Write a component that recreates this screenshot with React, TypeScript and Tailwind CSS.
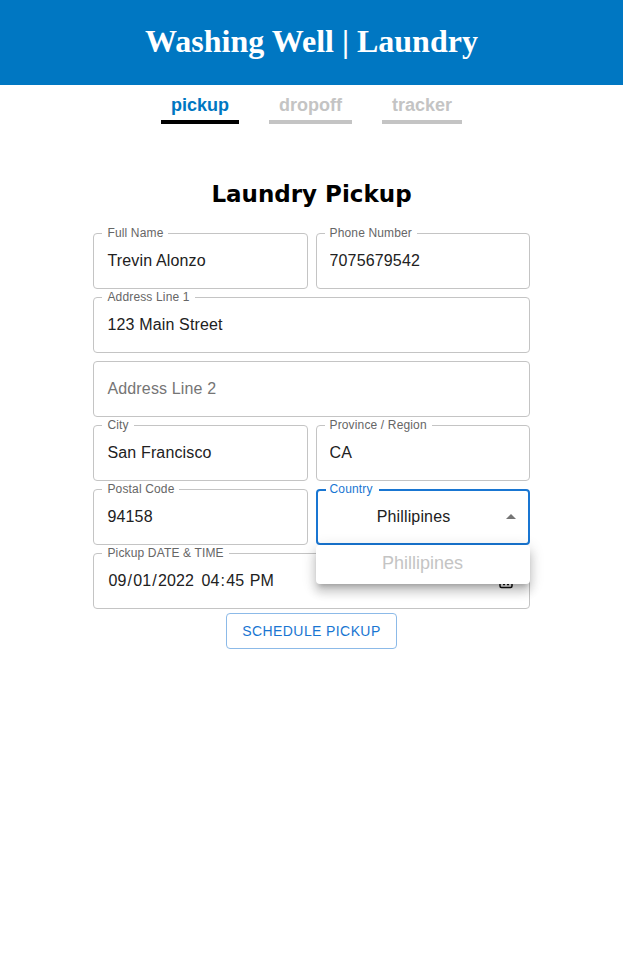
import { useId, useState } from "react";

const SANS = "font-['Liberation_Sans',Arial,sans-serif]";

const FLOATING_LABEL =
  "absolute -top-2 left-2 bg-white px-[5px] text-xs leading-[14px] tracking-[0.15px] text-[#666666]";
const RESTING_LABEL =
  "pointer-events-none absolute top-[15px] left-[13px] text-base leading-6 tracking-[0.15px] text-[#757575]";

type FieldProps = {
  label: string;
  value?: string;
  type?: string;
  wide?: boolean;
};

function Field({ label, value = "", type = "text", wide = false }: FieldProps) {
  const id = useId();
  const [text, setText] = useState(value);
  return (
    <div className={`relative h-14 rounded border border-[#c4c4c4] ${wide ? "col-span-2" : ""}`}>
      <label htmlFor={id} className={text === "" ? RESTING_LABEL : FLOATING_LABEL}>
        {label}
      </label>
      <input
        id={id}
        type={type}
        value={text}
        onChange={(e) => setText(e.target.value)}
        className="block h-full w-full bg-transparent px-[13px] text-base tracking-[0.15px] text-[#212121] outline-none"
      />
    </div>
  );
}

function DateTimeField() {
  const id = useId();
  return (
    <div className="relative col-span-2 flex h-14 items-center rounded border border-[#c4c4c4] px-[13px] text-base tracking-[0.15px] text-[#212121]">
      <label htmlFor={id} className={FLOATING_LABEL}>
        Pickup DATE &amp; TIME
      </label>
      <input
        id={id}
        type="date"
        defaultValue="2022-09-01"
        className="w-[93px] bg-transparent outline-none [&::-webkit-calendar-picker-indicator]:hidden"
      />
      <input
        type="time"
        aria-label="Pickup time"
        defaultValue="16:45"
        className="w-24 bg-transparent outline-none [&::-webkit-calendar-picker-indicator]:hidden"
      />
      <button type="button" aria-label="Open calendar" className="ml-auto pr-[3px]">
        <svg viewBox="0 0 14 16" className="h-4 w-3.5" fill="none" stroke="#111111" strokeWidth="1.5">
          <rect x="1" y="2.5" width="12" height="12" rx="1.5" />
          <path d="M1 5.5h12M4 0.5v3M10 0.5v3" />
          <path d="M4 8.5h2M8 8.5h2M4 11.5h2M8 11.5h2" />
        </svg>
      </button>
    </div>
  );
}

function CountryField() {
  const id = useId();
  return (
    <div className="relative h-14 rounded border-2 border-[#1976d2]">
      <label
        htmlFor={id}
        className="absolute -top-[9px] left-2 z-20 bg-white pr-1.5 pl-1 text-xs leading-[14px] tracking-[0.15px] text-[#1976d2]"
      >
        Country
      </label>
      <select
        id={id}
        defaultValue="Phillipines"
        className="block h-full w-full appearance-none bg-transparent pr-[30px] pl-3 text-center text-base tracking-[0.15px] text-[#212121] outline-none"
      >
        <option>Phillipines</option>
      </select>
      <svg
        viewBox="0 0 24 24"
        aria-hidden="true"
        className="pointer-events-none absolute top-[14px] right-[5px] size-6 fill-[#757575]"
      >
        <path d="M7 14l5-5 5 5z" />
      </svg>
      <ul
        role="listbox"
        aria-label="Country"
        className="absolute -inset-x-0.5 top-[54px] z-10 rounded bg-white shadow-[0_5px_5px_-3px_rgba(0,0,0,0.2),0_8px_10px_1px_rgba(0,0,0,0.14),0_3px_14px_2px_rgba(0,0,0,0.12)]"
      >
        <li
          role="option"
          aria-selected="true"
          className="h-[39px] text-center text-lg leading-9 text-[#c4c4c4]"
        >
          Phillipines
        </li>
      </ul>
    </div>
  );
}

const TABS = ["pickup", "dropoff", "tracker"];

export default function App() {
  return (
    <div className={`min-h-screen bg-white ${SANS}`}>
      <header className="flex h-[85px] items-center justify-center bg-[#0077c2] pb-1">
        <span className="font-['Liberation_Serif',serif] text-[32px] leading-10 font-bold text-white">
          Washing Well | Laundry
        </span>
      </header>

      <nav className="flex justify-center gap-[30px] pt-2">
        {TABS.map((tab) => (
          <a
            key={tab}
            href={`#${tab}`}
            className={`border-b-4 px-2.5 pb-[3px] text-lg leading-6 font-bold ${
              tab === "pickup"
                ? "border-black text-[#0077c2]"
                : "border-[#c4c4c4] text-[#c4c4c4]"
            }`}
          >
            {tab}
          </a>
        ))}
      </nav>

      <main className="mx-auto w-[70%] pt-[52px]">
        <h1 className="text-center font-['DejaVu_Sans',sans-serif] text-[23px] leading-9 font-bold text-black">
          Laundry Pickup
        </h1>
        <form className="pt-[21px]" onSubmit={(e) => e.preventDefault()}>
          <div className="grid grid-cols-2 gap-2">
            <Field label="Full Name" value="Trevin Alonzo" />
            <Field label="Phone Number" value="7075679542" type="tel" />
            <Field label="Address Line 1" value="123 Main Street" wide />
            <Field label="Address Line 2" wide />
            <Field label="City" value="San Francisco" />
            <Field label="Province / Region" value="CA" />
            <Field label="Postal Code" value="94158" />
            <CountryField />
            <DateTimeField />
          </div>
          <button
            type="submit"
            className="mx-auto mt-1 block h-9 rounded border border-[#8cbae8] px-[15px] text-sm tracking-[0.4px] text-[#1976d2] uppercase"
          >
            Schedule Pickup
          </button>
        </form>
      </main>
    </div>
  );
}
